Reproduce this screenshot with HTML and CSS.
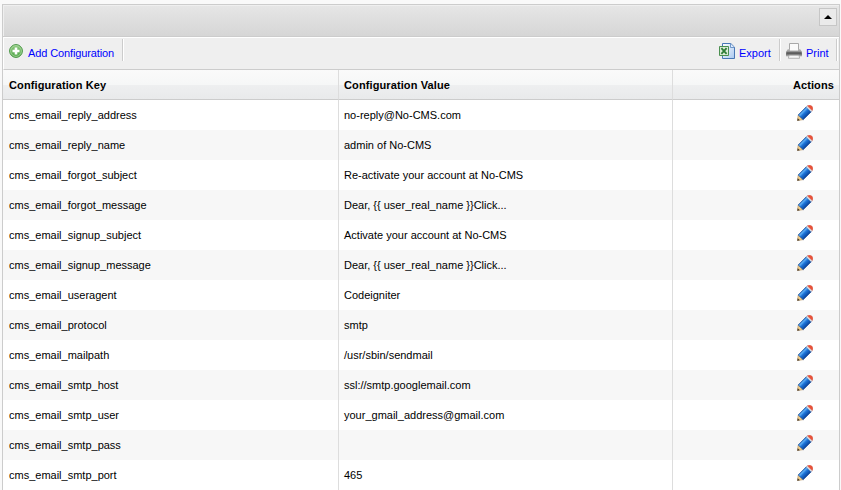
FILE: index.html
```html
<!DOCTYPE html>
<html lang="en">
<head>
<meta charset="utf-8">
<title>Configuration</title>
<link rel="stylesheet" href="styles.css">
</head>
<body>
<svg class="defs" width="0" height="0" aria-hidden="true">
  <defs>
    <linearGradient id="blue" gradientUnits="userSpaceOnUse" x1="4.5" y1="5" x2="10.5" y2="11">
      <stop offset="0" stop-color="#1c68c4"/><stop offset="0.3" stop-color="#5aabf2"/><stop offset="0.5" stop-color="#1c73d8"/><stop offset="1" stop-color="#0a4096"/>
    </linearGradient>
    <linearGradient id="green" x1="0" y1="0" x2="0" y2="1">
      <stop offset="0" stop-color="#8fca80"/><stop offset="1" stop-color="#4fa548"/>
    </linearGradient>
    <linearGradient id="sheet" x1="0" y1="0" x2="1" y2="1">
      <stop offset="0" stop-color="#ffffff"/><stop offset="1" stop-color="#a9c8f0"/>
    </linearGradient>
    <linearGradient id="metal" x1="0" y1="0" x2="0" y2="1">
      <stop offset="0" stop-color="#c9c9c9"/><stop offset="0.4" stop-color="#8a8a8a"/><stop offset="0.65" stop-color="#666"/><stop offset="1" stop-color="#c4c4c4"/>
    </linearGradient>
    <symbol id="pencil" viewBox="0 0 16 16">
      <path d="M.4 15.6 1.2 9.9 6.2 14.7Z" fill="#f0cd8c" stroke="#b08b55" stroke-width=".5"/>
      <path d="M.2 15.8 .7 13.2 2.9 15.2Z" fill="#3c332b"/>
      <path d="M1.2 9.9 9.3 1.8 14.3 6.7 6.2 14.7Z" fill="url(#blue)" stroke="#12489a" stroke-width=".7"/>
      <path d="M9.2 1.9 10.4 .8 15.3 5.6 14.1 6.8Z" fill="#dfe4ea" stroke="#8e9aab" stroke-width=".3"/>
      <path d="M10.4.8Q12 0 13.8.5 15.6 1.2 15.8 2.9 16 4.5 15.3 5.6Z" fill="#ea5138" stroke="#cb3e2a" stroke-width=".4"/>
    </symbol>
  </defs>
</svg>
<main class="grid">
  <header class="titlebar">
    <span class="toggle"><svg width="8" height="4" viewBox="0 0 8 4"><path d="M4 0 8 4H0Z"/></svg></span>
  </header>
  <nav class="toolbar">
    <a class="tool add">
      <svg width="14" height="14" viewBox="0 0 14 14"><circle cx="7" cy="7" r="6.4" fill="url(#green)" stroke="#479443"/><circle cx="7" cy="7" r="5.4" fill="none" stroke="#b8dfac" stroke-width=".7"/><path d="M5.7 3.5h2.6v2.2h2.2v2.6H8.3v2.2H5.7V8.3H3.5V5.7h2.2Z" fill="#fff"/></svg>
      <span>Add Configuration</span>
    </a>
    <i class="sep"></i>
    <span class="space"></span>
    <a class="tool export">
      <svg width="16" height="16" viewBox="0 0 16 16"><path d="M3.5.5h8.3l3.7 3.7v11.3h-12Z" fill="url(#sheet)" stroke="#4877b5"/><path d="M11.5.7v3.8h3.8" fill="#deecff" stroke="#5683bd" stroke-width=".8"/><path d="M.5 3.5h9v9h-9Z" fill="#dcebd7" stroke="#4b8f50"/><path d="m2.4 5.2 5.2 5.7M7.6 5.2l-5.2 5.7" stroke="#2f7d37" stroke-width="1.8"/></svg>
      <span>Export</span>
    </a>
    <i class="sep"></i>
    <a class="tool print">
      <svg width="16" height="16" viewBox="0 0 16 16"><path d="M3.5 8V.5h9V8" fill="#fafafa" stroke="#a8a8a8"/><path d="M1.8 6h1.7v1.6h9V6h1.7L16 9v4q0 .6-.6.6H.6Q0 13.600 0 13V9Z" fill="url(#metal)"/><path d="M1 10h14" stroke="#4c4c4c"/><path d="M3 12.2h10l.6 3.100H2.400Z" fill="#f5f5f5" stroke="#a3a3a3" stroke-width=".8"/></svg>
      <span>Print</span>
    </a>
    <i class="sep"></i>
  </nav>
  <table>
    <colgroup><col class="key"><col class="value"><col class="actions"></colgroup>
    <thead><tr><th>Configuration Key</th><th>Configuration Value</th><th>Actions</th></tr></thead>
    <tbody>
      <tr><td>cms_email_reply_address</td><td>no-reply@No-CMS.com</td><td><svg class="edit"><use href="#pencil"/></svg></td></tr>
      <tr><td>cms_email_reply_name</td><td>admin of No-CMS</td><td><svg class="edit"><use href="#pencil"/></svg></td></tr>
      <tr><td>cms_email_forgot_subject</td><td>Re-activate your account at No-CMS</td><td><svg class="edit"><use href="#pencil"/></svg></td></tr>
      <tr><td>cms_email_forgot_message</td><td>Dear, {{ user_real_name }}Click...</td><td><svg class="edit"><use href="#pencil"/></svg></td></tr>
      <tr><td>cms_email_signup_subject</td><td>Activate your account at No-CMS</td><td><svg class="edit"><use href="#pencil"/></svg></td></tr>
      <tr><td>cms_email_signup_message</td><td>Dear, {{ user_real_name }}Click...</td><td><svg class="edit"><use href="#pencil"/></svg></td></tr>
      <tr><td>cms_email_useragent</td><td>Codeigniter</td><td><svg class="edit"><use href="#pencil"/></svg></td></tr>
      <tr><td>cms_email_protocol</td><td>smtp</td><td><svg class="edit"><use href="#pencil"/></svg></td></tr>
      <tr><td>cms_email_mailpath</td><td>/usr/sbin/sendmail</td><td><svg class="edit"><use href="#pencil"/></svg></td></tr>
      <tr><td>cms_email_smtp_host</td><td>ssl://smtp.googlemail.com</td><td><svg class="edit"><use href="#pencil"/></svg></td></tr>
      <tr><td>cms_email_smtp_user</td><td>your_gmail_address@gmail.com</td><td><svg class="edit"><use href="#pencil"/></svg></td></tr>
      <tr><td>cms_email_smtp_pass</td><td></td><td><svg class="edit"><use href="#pencil"/></svg></td></tr>
      <tr><td>cms_email_smtp_port</td><td>465</td><td><svg class="edit"><use href="#pencil"/></svg></td></tr>
    </tbody>
  </table>
</main>
</body>
</html>
```
FILE: styles.css
```css
* { box-sizing: border-box; }
html { overflow: hidden; background: #f9f9f9; }
body { margin: 0; padding: 4px 1px 0 2px; font: 11px/14px "Liberation Sans", Arial, sans-serif; color: #000; }
.defs { display: block; height: 0; }
svg { display: block; flex: none; }
.grid { border: 1px solid #ccc; border-bottom: 0; background: #fff; width: 838px; }
.titlebar { height: 32px; border-bottom: 1px solid #ccc; background: linear-gradient(#e6e6e6, #d6d6d6); box-shadow: inset 1px 1px #efefef; display: flex; justify-content: flex-end; padding: 3px 2px 0 0; }
.toggle { width: 18px; height: 18px; border: 1px solid #c6c6c6; background: #eaeaea; display: flex; align-items: center; justify-content: center; }
.toolbar { height: 33px; border: 1px solid #fff; border-right: 0; border-bottom: 1px solid #ccc; background: #efefef; display: flex; align-items: flex-start; padding-top: 1px; }
.tool { display: flex; color: #00f; }
.tool span { padding-top: 7px; }
.add { padding-left: 5px; width: 118px; gap: 5px; }
.add span { letter-spacing: -.12px; }
.add svg { margin-top: 5px; }
.export { width: 60px; gap: 4px; }
.print { width: 55px; padding-left: 5px; gap: 4px; }
.export svg, .print svg { margin-top: 4px; }
.sep { flex: none; width: 2px; height: 22px; border-left: 1px solid #ccc; border-right: 1px solid #fff; }
.space { flex: 1; }
.print + .sep { margin-right: 1px; }
table { width: 836px; table-layout: fixed; border-collapse: separate; border-spacing: 0; }
.key { width: 336px; }
.value { width: 334px; }
.actions { width: 166px; }
th, td { height: 30px; padding: 0 5px; text-align: left; vertical-align: middle; white-space: nowrap; border-right: 1px solid #ddd; }
th:first-child, td:first-child { padding-left: 6px; }
th { border-bottom: 1px solid #ccc; background: linear-gradient(#fafafa 0, #f6f7f7 50%, #eeeff0 52%, #e9eaeb); padding-top: 1px; letter-spacing: .11px; }
th:last-child { text-align: right; }
th:last-child, td:last-child { border-right: 0; }
tbody tr:nth-child(even) { background: #f7f7f7; }
.edit { width: 16px; height: 16px; margin: -4px 21px 0 auto; }
```
